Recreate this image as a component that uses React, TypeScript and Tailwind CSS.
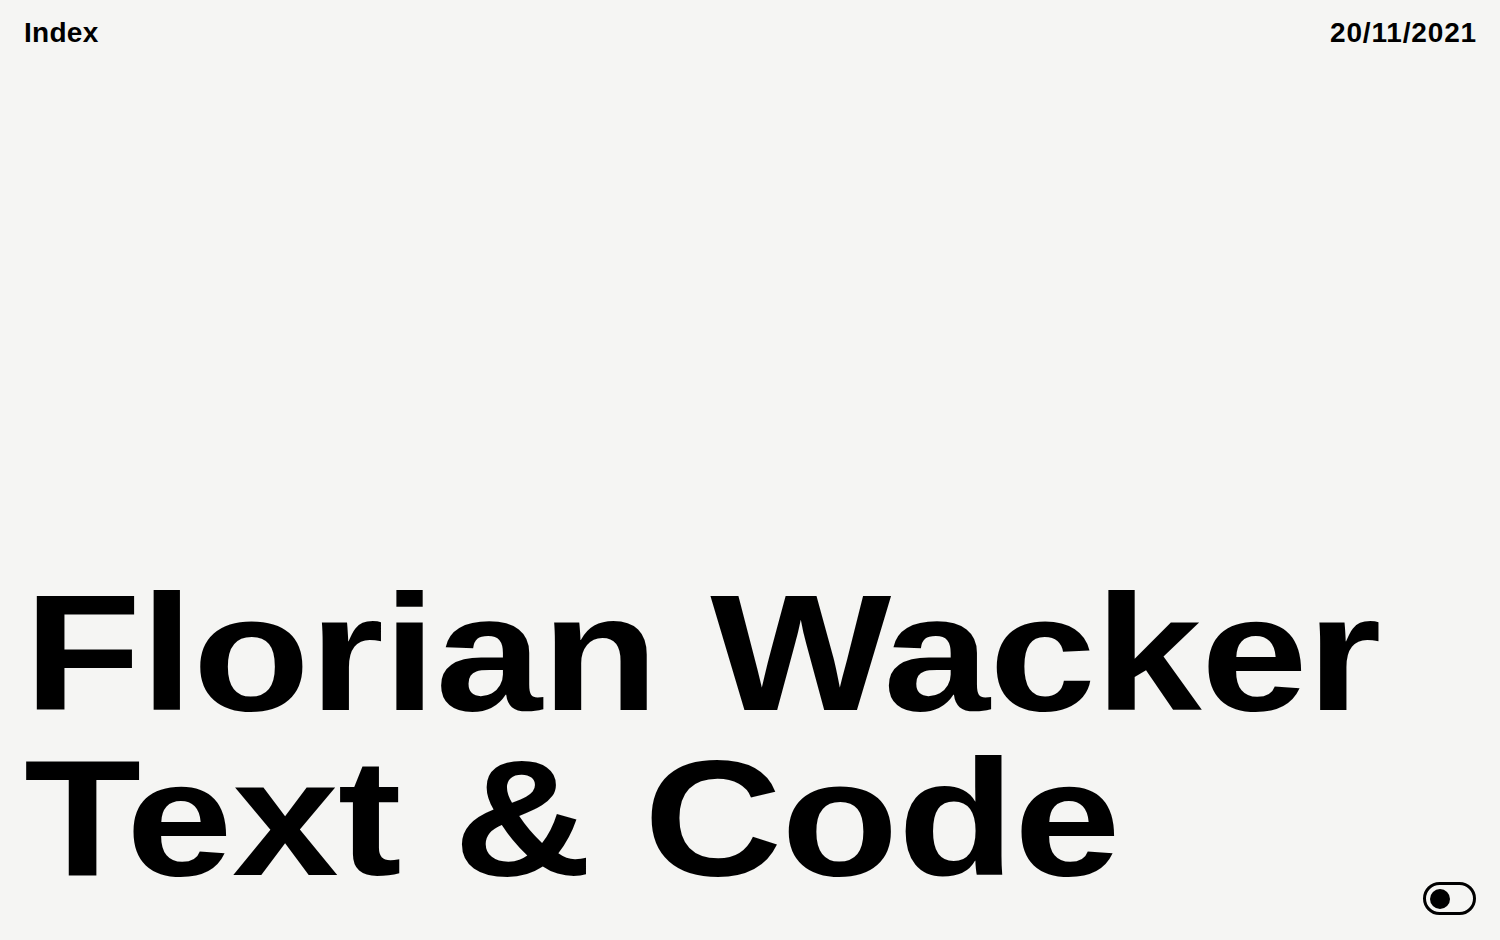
import React from 'react';

const App: React.FC = () => {
  return (
    <div className="min-h-screen bg-[#f5f5f3] text-black flex flex-col font-['Liberation_Sans',Arial,sans-serif] overflow-hidden">
      {/* Top bar */}
      <header className="flex items-start justify-between px-[24px] pt-[19px]">
        <a href="#" className="text-[28px] leading-none font-bold tracking-[0.01em]">Index</a>
        <span className="text-[28px] leading-none font-bold tracking-[0.03em] mr-[-1px]">20/11/2021</span>
      </header>

      <div className="flex-1" />

      {/* Title + theme toggle */}
      <main className="flex items-end justify-between pl-[24px] pr-[24px] pb-[39px]">
        <h1 className="text-[165px] leading-none font-bold tracking-[-0.004em] origin-left scale-x-[1.162] whitespace-nowrap">
          <span className="block">Florian Wacker</span>
          <span className="block">Text &amp; Code</span>
        </h1>
        <button
          aria-label="Toggle theme"
          className="mb-[-14px] w-[53px] h-[33px] rounded-full border-[3px] border-black flex items-center px-[4px] shrink-0"
        >
          <span className="block w-[20px] h-[20px] rounded-full bg-black" />
        </button>
      </main>
    </div>
  );
};

export default App;
